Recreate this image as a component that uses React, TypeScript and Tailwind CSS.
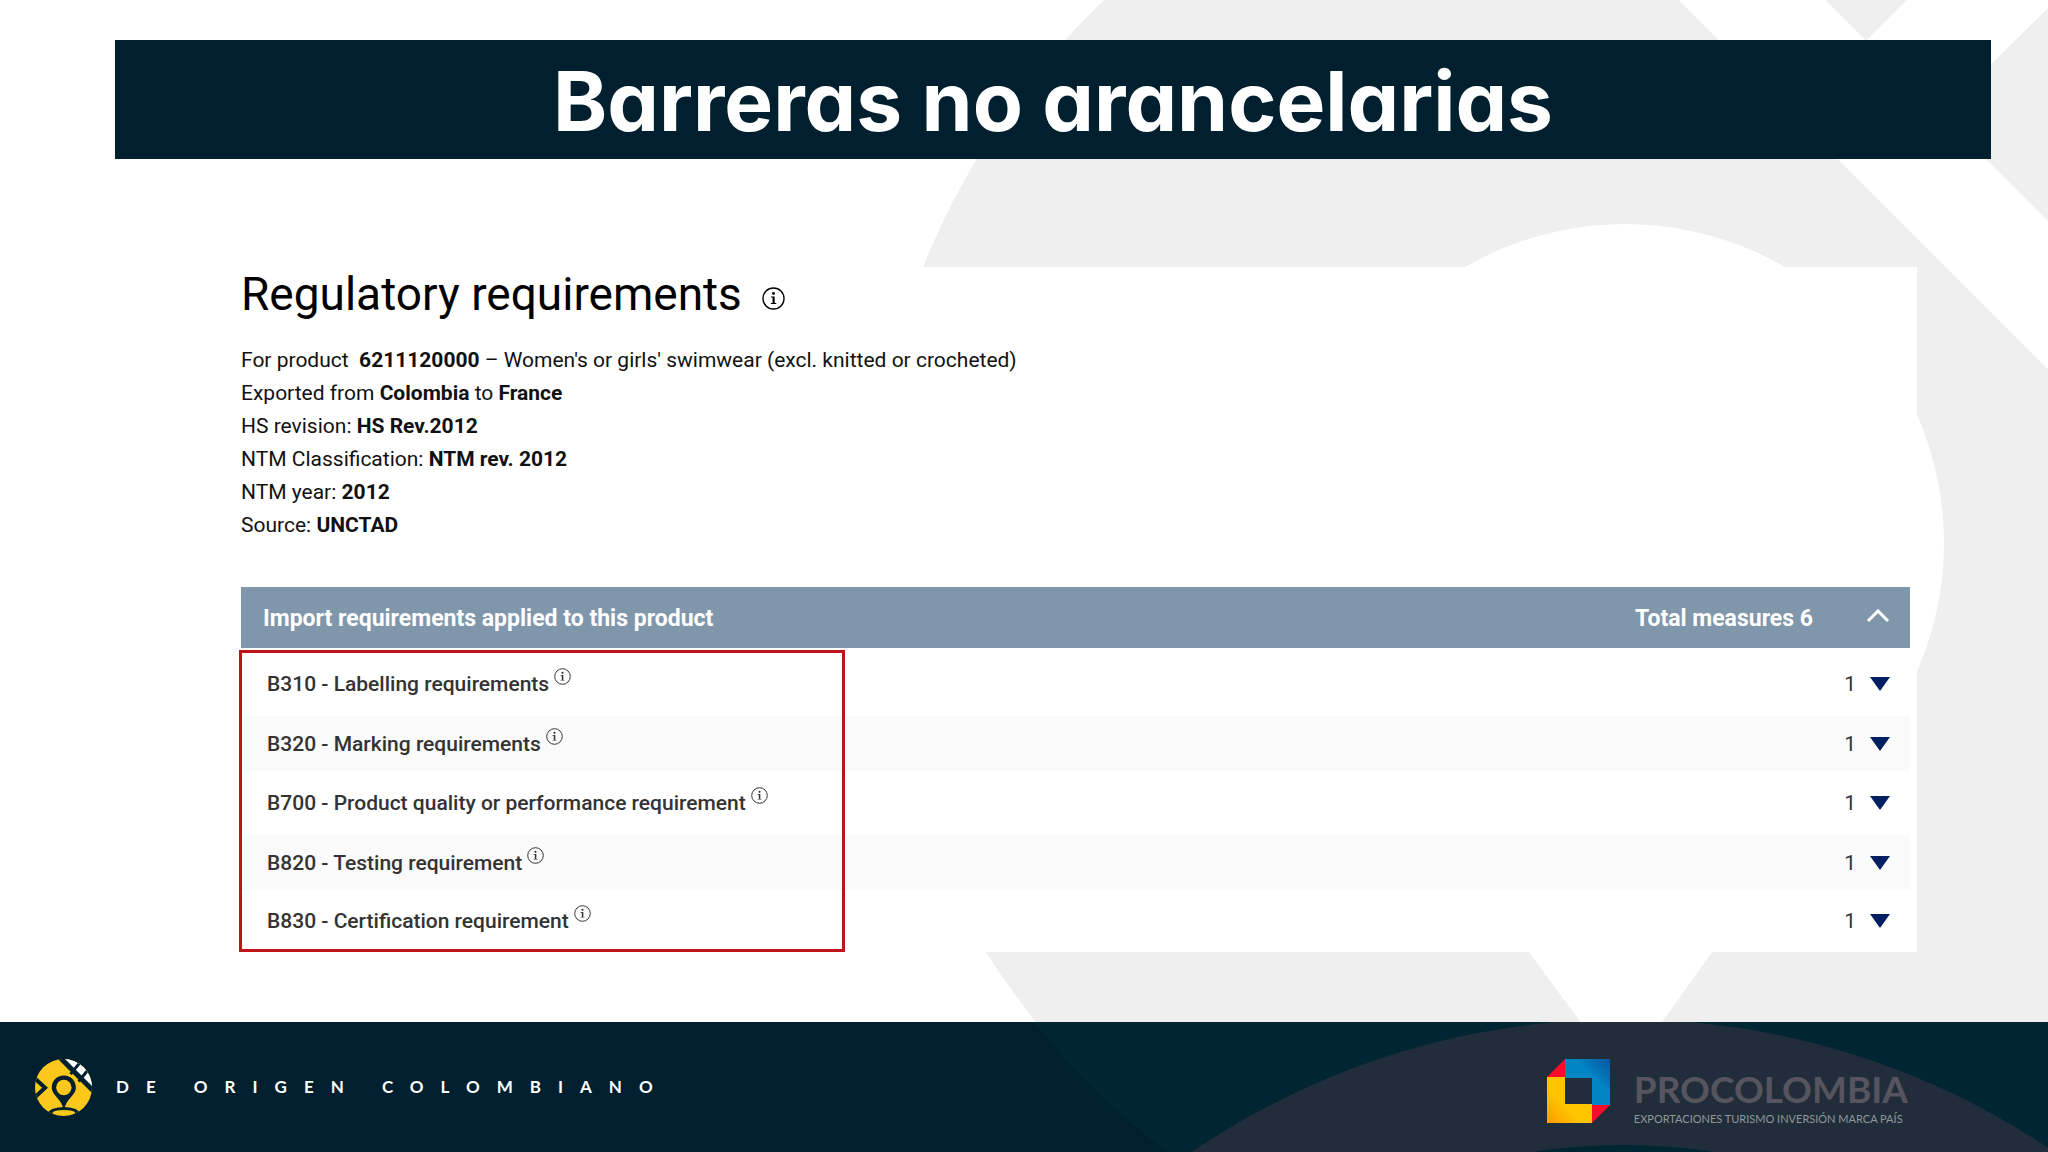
import React, { useState } from "react";

interface Measure {
  code: string;
  name: string;
  count: number;
}

const measures: Measure[] = [
  { code: "B310", name: "Labelling requirements", count: 1 },
  { code: "B320", name: "Marking requirements", count: 1 },
  { code: "B700", name: "Product quality or performance requirement", count: 1 },
  { code: "B820", name: "Testing requirement", count: 1 },
  { code: "B830", name: "Certification requirement", count: 1 },
];

const InfoIcon: React.FC<{ className: string }> = ({ className }) => (
  <svg viewBox="0 0 24 24" className={className} fill="none" aria-hidden="true">
    <circle cx="12" cy="12" r="11" stroke="currentColor" strokeWidth="1.4" />
    <circle cx="12" cy="6.8" r="1.5" fill="currentColor" />
    <path
      d="M9.3 10h3.9v6.8h1.7v1H9.3v-1H11V11H9.3z"
      fill="currentColor"
    />
  </svg>
);

// Large map pin and diagonal bands behind the slide
const Backdrop: React.FC = () => (
  <svg
    viewBox="0 0 2048 1152"
    preserveAspectRatio="xMidYMin slice"
    className="absolute inset-0 h-full w-full"
    aria-hidden="true"
  >
    <circle cx="1625" cy="548" r="756" fill="#f0eff0" />
    <circle cx="1625" cy="543" r="319" fill="#fff" />
    <path d="M1528 951 1622 1078 1713 951z" fill="#fff" />
    <path d="M1679 0H2048V369z" fill="#fff" />
    <path d="M1825 0h82l-41 41z" fill="#f0eff0" />
    <path d="M2048 8v213L1941 114z" fill="#f0eff0" />
  </svg>
);

const OriginLogo: React.FC = () => (
  <svg viewBox="44 43 170 170" className="h-[57px] w-[57px]" aria-hidden="true">
    <defs>
      <clipPath id="origin-disc">
        <circle cx="129" cy="128" r="85" />
      </clipPath>
    </defs>
    <g clipPath="url(#origin-disc)">
      <rect x="44" y="43" width="170" height="170" fill="#fdc81c" />
      <path d="M104 20 230 146V20z" fill="#fff" />
      <path d="M112 32 224 144" stroke="#001f2f" strokeWidth="15" />
      <path d="M150 88 186 44M174 110 210 66" stroke="#001f2f" strokeWidth="9" />
      <path
        d="M30 88 74 129 30 170"
        fill="none"
        stroke="#001f2f"
        strokeWidth="12"
      />
      <ellipse cx="130" cy="205" rx="46" ry="19" fill="#001f2f" />
      <path
        d="M130 92c-21 0-36 16-36 36 0 17 14 26 24 40 5 7 8 16 12 24 4-8 7-17 12-24 10-14 24-23 24-40 0-20-15-36-36-36z"
        fill="#001f2f"
      />
      <circle cx="130" cy="128" r="23" fill="#fdc81c" />
      <ellipse cx="130" cy="204" rx="34" ry="9" fill="#fdc81c" />
    </g>
  </svg>
);

const ProColombiaLogo: React.FC = () => (
  <svg viewBox="0 0 63 64" className="mb-1 h-[64px] w-[63px]" aria-hidden="true">
    <defs>
      <linearGradient id="pc-blue" x1="0" y1="1" x2="1" y2="0">
        <stop offset="0.6" stopColor="#0085c3" />
        <stop offset="1" stopColor="#0a559f" />
      </linearGradient>
      <linearGradient id="pc-yellow" x1="0" y1="1" x2="1" y2="0">
        <stop offset="0" stopColor="#ff9c00" />
        <stop offset="0.4" stopColor="#ffc600" />
      </linearGradient>
    </defs>
    <path d="M18 0v18H0z" fill="#ff0a2a" />
    <path d="M45 46h18L45 64z" fill="#ff0a2a" />
    <path d="M18 0h45v46H45V19H18z" fill="url(#pc-blue)" />
    <path d="M0 18h18v27h27v19H0z" fill="url(#pc-yellow)" />
  </svg>
);

const MeasuresTable: React.FC = () => {
  const [open, setOpen] = useState(true);

  return (
    <div className="relative">
      <table className="w-full border-collapse">
        <thead>
          <tr className="h-[61px] bg-[#7f96ab] text-[23px] leading-8 font-bold text-white">
            <th className="pt-[2px] pl-[22px] text-left">
              Import requirements applied to this product
            </th>
            <th className="pt-[2px] pr-5">
              <div className="flex items-center justify-end gap-[53px]">
                Total measures 6
                <button
                  aria-label="Toggle measures"
                  aria-expanded={open}
                  onClick={() => setOpen(!open)}
                >
                  <svg viewBox="0 0 24 20" className="h-5 w-6" fill="none">
                    <path
                      d="M2 12 12 2l10 10"
                      stroke="currentColor"
                      strokeWidth="3"
                    />
                  </svg>
                </button>
              </div>
            </th>
          </tr>
        </thead>
        {open && (
          <tbody className="text-[21px] leading-8 text-[#333]">
            {measures.map((m) => (
              <tr
                key={m.code}
                className="h-16 first:h-[68px] last:h-[62px] even:h-[55px] even:bg-[#fbfafb] first:*:pt-1"
              >
                <th className="pl-[26px] text-left font-medium">
                  <div className="flex items-start gap-[5px]">
                    {m.code} - {m.name}
                    <button aria-label={`About ${m.name}`}>
                      <InfoIcon className="h-[17px] w-[17px]" />
                    </button>
                  </div>
                </th>
                <td className="pr-5">
                  <div className="flex items-center justify-end gap-[14px]">
                    {m.count}
                    <button aria-label={`Show ${m.name}`}>
                      <svg viewBox="0 0 20 14" className="h-[14px] w-5">
                        <path d="M0 0h20L10 14z" fill="#001f60" />
                      </svg>
                    </button>
                  </div>
                </td>
              </tr>
            ))}
          </tbody>
        )}
      </table>

      {/* Highlight over the measure names */}
      <div className="pointer-events-none absolute top-[63px] bottom-0 -left-[2px] w-[606px] border-3 border-[#bf1519]" />
    </div>
  );
};

const App: React.FC = () => {
  return (
    <div className="relative flex min-h-screen flex-col overflow-hidden bg-white font-['Roboto',sans-serif]">
      <Backdrop />

      <header className="relative mt-10 mr-[57px] ml-[115px] flex h-[119px] items-center justify-center bg-[#00202f] pt-1">
        <h1 className="font-['Inter',sans-serif] text-[82px] leading-none font-bold text-white [font-feature-settings:'cv11']">
          Barreras no arancelarias
        </h1>
      </header>

      <main className="relative mt-[108px] mr-[131px] ml-[236px] bg-white pr-[7px] pl-[5px]">
        <div className="flex items-baseline gap-5 text-black">
          <h2 className="text-[46px] leading-[54px]">Regulatory requirements</h2>
          <button aria-label="About regulatory requirements">
            <InfoIcon className="h-[23px] w-[23px]" />
          </button>
        </div>

        <div className="mt-[23px] mb-[45px] text-[21px] leading-[33px] text-[#111]">
          <p>
            For product&nbsp; <b>6211120000</b> – Women's or girls' swimwear
            (excl. knitted or crocheted)
          </p>
          <p>
            Exported from <b>Colombia</b> to <b>France</b>
          </p>
          <p>
            HS revision: <b>HS Rev.2012</b>
          </p>
          <p>
            NTM Classification: <b>NTM rev. 2012</b>
          </p>
          <p>
            NTM year: <b>2012</b>
          </p>
          <p>
            Source: <b>UNCTAD</b>
          </p>
        </div>

        <MeasuresTable />
      </main>

      <footer className="relative mt-auto flex h-[130px] items-center justify-between bg-[#001f2f] pr-[140px] pl-[35px] font-['Lato',sans-serif]">
        <svg
          viewBox="0 0 2048 130"
          preserveAspectRatio="xMidYMin slice"
          className="absolute inset-0 h-full w-full"
          aria-hidden="true"
        >
          <path d="M1034 0Q1090 72 1167 130H2048V0z" fill="#002533" />
          <circle cx="1623" cy="763" r="766" fill="#212d3a" />
          <circle cx="1623" cy="705" r="582" fill="#002533" />
        </svg>

        <div className="relative flex items-center gap-6">
          <OriginLogo />
          <span className="text-[17px] leading-6 font-bold tracking-[17px] text-white">
            DE ORIGEN COLOMBIANO
          </span>
        </div>

        <div className="relative flex items-end gap-6 pt-3">
          <ProColombiaLogo />
          <div className="flex flex-col gap-1">
            <span className="text-[37px] leading-9 font-bold text-[#56555f]">
              PROCOLOMBIA
            </span>
            <span className="text-[11px] leading-4 text-[#8f979a]">
              EXPORTACIONES TURISMO INVERSIÓN MARCA PAÍS
            </span>
          </div>
        </div>
      </footer>
    </div>
  );
};

export default App;
